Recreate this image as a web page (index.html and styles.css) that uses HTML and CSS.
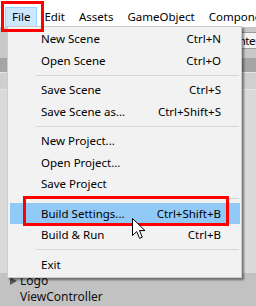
FILE: index.html
```html
<!DOCTYPE html>
<html>
<head>
<meta charset="utf-8">
<link rel="stylesheet" href="styles.css">
</head>
<body>
<div class="app">
  <nav class="menubar">
    <span class="mb-item mb-file active">File</span>
    <span class="mb-item mb-edit">Edit</span>
    <span class="mb-item mb-assets">Assets</span>
    <span class="mb-item mb-go">GameObject</span>
    <span class="mb-item mb-comp">Component</span>
  </nav>
  <div class="toolbar">
    <span class="tb-btn">Center</span>
  </div>
  <div class="tabstrip"></div>
  <div class="paneltools"></div>
  <div class="panelbody">
    <div class="filler"></div>
    <ul class="hierarchy">
      <li class="hier-row"><span class="tri"></span>Logo</li>
      <li class="hier-row">ViewController</li>
    </ul>
  </div>

  <div class="dropdown">
    <div class="item"><span class="label">New Scene</span><span class="key">Ctrl+N</span></div>
    <div class="item"><span class="label">Open Scene</span><span class="key">Ctrl+O</span></div>
    <div class="sep"></div>
    <div class="item"><span class="label">Save Scene</span><span class="key">Ctrl+S</span></div>
    <div class="item"><span class="label">Save Scene as...</span><span class="key">Ctrl+Shift+S</span></div>
    <div class="sep"></div>
    <div class="item"><span class="label">New Project...</span></div>
    <div class="item"><span class="label">Open Project...</span></div>
    <div class="item"><span class="label">Save Project</span></div>
    <div class="sep"></div>
    <div class="item hot"><span class="label">Build Settings...</span><span class="key">Ctrl+Shift+B</span></div>
    <div class="item"><span class="label">Build &amp; Run</span><span class="key">Ctrl+B</span></div>
    <div class="sep"></div>
    <div class="item"><span class="label">Exit</span></div>
  </div>

  <div class="annot annot-file"></div>
  <div class="annot annot-build"></div>
  <svg class="cursor" width="15" height="24" viewBox="0 0 15 24">
    <path d="M0.5 0.5 L0.5 17.5 L4.7 13.6 L7.6 20.4 L10.3 19.2 L7.5 12.6 L13 12.6 Z" fill="#fff" stroke="#000" stroke-width="1" stroke-linejoin="miter"/>
  </svg>
</div>
</body>
</html>
```

FILE: styles.css
```css
* { box-sizing: border-box; }
html, body { margin: 0; padding: 0; }
body {
  width: 256px;
  height: 306px;
  overflow: hidden;
  background: #c2c2c2;
  font-family: "Noto Sans", "Open Sans", sans-serif;
  font-size: 11.5px;
  color: #000;
}
.app {
  position: relative;
  width: 256px;
  height: 306px;
  display: flex;
  flex-direction: column;
}
.menubar {
  height: 27px;
  background: #ffffff;
  display: flex;
  align-items: flex-end;
  padding-left: 5px;
  white-space: nowrap;
}
.mb-item {
  height: 20px;
  line-height: 18px;
  padding: 0 6px;
  border: 1px solid transparent;
  flex: none;
}
.mb-item.active {
  background: #cce8ff;
  border-color: #99d1ff;
}
.toolbar {
  height: 31px;
  background: #c8c8c8;
  display: flex;
  padding-top: 5px;
}
.tb-btn {
  flex: none;
  height: 17px;
  line-height: 15px;
  padding: 0 6px;
  margin-left: 219px;
  background: #f4f4f4;
  border: 1px solid #9a9a9a;
  white-space: nowrap;
  letter-spacing: -0.5px;
}
.tabstrip {
  height: 14px;
  background: #a5a5a5;
}
.paneltools {
  height: 18px;
  background: #cfcfcf;
  border-top: 1px solid #e6e6e6;
  border-bottom: 1px solid #e6e6e6;
}
.panelbody {
  flex: 1;
  display: flex;
  flex-direction: column;
  background: #c2c2c2;
}
.filler { flex: 1; background: #dadada; }
.hierarchy {
  list-style: none;
  margin: 0;
  padding: 0 0 1px 0;
  background: #c2c2c2;
}
.hier-row {
  height: 16px;
  line-height: 16px;
  padding-left: 20px;
  position: relative;
  font-size: 12px;
  color: #111;
}
.tri {
  position: absolute;
  left: 10px;
  top: 4px;
  width: 0;
  height: 0;
  border-left: 7px solid #555;
  border-top: 4px solid transparent;
  border-bottom: 4px solid transparent;
}

.dropdown {
  position: absolute;
  left: 7px;
  top: 26px;
  width: 235px;
  background: #f2f2f2;
  border: 1px solid #cccccc;
  padding: 1px 1px 2px 2px;
  box-shadow: 2px 2px 2px rgba(0, 0, 0, 0.45);
}
.item {
  height: 21.5px;
  display: flex;
  align-items: center;
  justify-content: space-between;
  padding: 0 19px 0 31px;
  white-space: nowrap;
}
.item.hot { background: #91c9f7; }
.sep {
  height: 8px;
  display: flex;
  align-items: center;
  padding: 0 1px 0 26px;
}
.sep::before {
  content: "";
  display: block;
  height: 1px;
  flex: 1;
  background: #d7d7d7;
}

.annot {
  position: absolute;
  border: 3px solid #ff0000;
}
.annot-file { left: 1px; top: 1px; width: 43px; height: 31px; }
.annot-build { left: 23px; top: 196px; width: 206px; height: 30px; }

.cursor {
  position: absolute;
  left: 132px;
  top: 218px;
}
```
